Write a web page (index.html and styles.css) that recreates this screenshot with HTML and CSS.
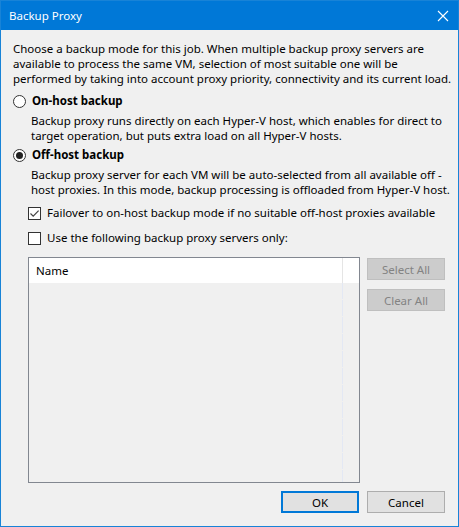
FILE: index.html
```html
<!DOCTYPE html>
<html>
<head>
<meta charset="utf-8">
<link rel="stylesheet" href="styles.css">
</head>
<body>
<div class="window">
  <div class="titlebar">
    <span class="title">Backup Proxy</span>
    <svg class="close" width="12" height="12" viewBox="0 0 12 12"><path d="M1 1 L11 11 M11 1 L1 11" stroke="#fff" stroke-width="1.1" fill="none"/></svg>
  </div>
  <div class="content">
    <p class="intro">Choose a backup mode for this job. When multiple backup proxy servers are<br>available to process the same VM, selection of most suitable one will be<br>performed by taking into account proxy priority, connectivity and its current load.</p>

    <div class="option first">
      <span class="radio"></span>
      <span class="label">On-host backup</span>
    </div>
    <p class="desc">Backup proxy runs directly on each Hyper-V host, which enables for direct to<br>target operation, but puts extra load on all Hyper-V hosts.</p>

    <div class="option second">
      <span class="radio checked"></span>
      <span class="label">Off-host backup</span>
    </div>
    <p class="desc">Backup proxy server for each VM will be auto-selected from all available off -<br>host proxies. In this mode, backup processing is offloaded from Hyper-V host.</p>

    <div class="check first-check">
      <span class="box"><svg width="11" height="11" viewBox="0 0 11 11"><path d="M1.5 5.5 L4.2 8.2 L9.6 2.6" stroke="#444" stroke-width="1.2" fill="none"/></svg></span>
      <span class="ctext">Failover to on-host backup mode if no suitable off-host proxies available</span>
    </div>
    <div class="check second-check">
      <span class="box"></span>
      <span class="ctext">Use the following backup proxy servers only:</span>
    </div>

    <div class="listarea">
      <div class="list">
        <div class="header">
          <div class="col-name">Name</div>
          <div class="col-rest"></div>
        </div>
        <div class="body">
          <div class="body-name"></div>
          <div class="body-sep"></div>
        </div>
      </div>
      <div class="sidebtns">
        <button class="btn disabled">Select All</button>
        <button class="btn disabled">Clear All</button>
      </div>
    </div>

    <div class="footer">
      <button class="btn ok">OK</button>
      <button class="btn">Cancel</button>
    </div>
  </div>
</div>
</body>
</html>
```
FILE: styles.css
```css
* { box-sizing: border-box; }
html, body { margin: 0; padding: 0; }
body {
  font-family: "Noto Sans", "Open Sans", sans-serif;
  font-size: 11.5px;
  line-height: 15px;
  color: #000;
  background: #f0f0f0;
}
.window {
  width: 459px;
  height: 527px;
  border: 1px solid #1883d7;
  background: #f0f0f0;
  display: flex;
  flex-direction: column;
}
.titlebar {
  height: 29px;
  background: #0078d7;
  color: #fff;
  display: flex;
  align-items: center;
  justify-content: space-between;
  padding: 0 9px 0 8px;
  flex: none;
}
.title { font-size: 11.5px; line-height: 15px; }
.close { display: block; }
.content {
  flex: 1;
  padding: 0 12px 0 12px;
  display: flex;
  flex-direction: column;
}
p { margin: 0; }
.intro {
  margin-top: 11px;
  white-space: nowrap;
}
.option {
  display: flex;
  align-items: center;
  height: 16px;
  line-height: 16px;
}
.option.first { margin-top: 7px; }
.option.second { margin-top: 4px; }
.radio {
  width: 13px;
  height: 13px;
  border: 1px solid #333;
  border-radius: 50%;
  background: #fff;
  display: flex;
  align-items: center;
  justify-content: center;
  flex: none;
}
.radio.checked::after {
  content: "";
  width: 7px;
  height: 7px;
  border-radius: 50%;
  background: #222;
}
.label {
  font-weight: bold;
  margin-left: 6px;
}
.desc {
  margin-top: 4px;
  padding-left: 18px;
  white-space: nowrap;
}
.check {
  display: flex;
  align-items: center;
  height: 16px;
  line-height: 16px;
  padding-left: 15px;
}
.first-check { margin-top: 8px; }
.second-check { margin-top: 9px; }
.box {
  width: 13px;
  height: 13px;
  border: 1px solid #333;
  background: #fff;
  flex: none;
  display: flex;
  align-items: center;
  justify-content: center;
}
.box svg { display: block; }
.ctext { margin-left: 6px; white-space: nowrap; }
.listarea {
  margin-top: 11px;
  margin-left: 15px;
  display: flex;
  gap: 7px;
  align-items: flex-start;
}
.list {
  width: 332px;
  height: 226px;
  border: 1px solid #828790;
  display: flex;
  flex-direction: column;
}
.header {
  height: 25px;
  background: #fff;
  display: flex;
  flex: none;
}
.col-name {
  width: 314px;
  border-right: 1px solid #e5e5e5;
  padding-left: 7px;
  display: flex;
  align-items: center;
}
.col-rest { flex: 1; }
.body {
  flex: 1;
  display: flex;
}
.body-name { width: 313px; }
.body-sep {
  width: 1px;
  background: repeating-linear-gradient(#e3e8f4 0 16px, #f0f0f0 16px 17px);
}
.sidebtns {
  display: flex;
  flex-direction: column;
  gap: 9px;
  margin-top: 1px;
}
.btn {
  font-family: inherit;
  font-size: 11.5px;
  width: 78px;
  height: 22px;
  background: #e1e1e1;
  border: 1px solid #adadad;
  color: #000;
  padding: 0;
  margin: 0;
  border-radius: 0;
}
.btn.disabled {
  background: #cccccc;
  border-color: #bfbfbf;
  color: #838383;
}
.footer {
  margin-top: 8px;
  display: flex;
  justify-content: flex-end;
  gap: 8px;
  padding-right: 1px;
}
.btn.ok {
  border: 2px solid #0078d7;
}
```
